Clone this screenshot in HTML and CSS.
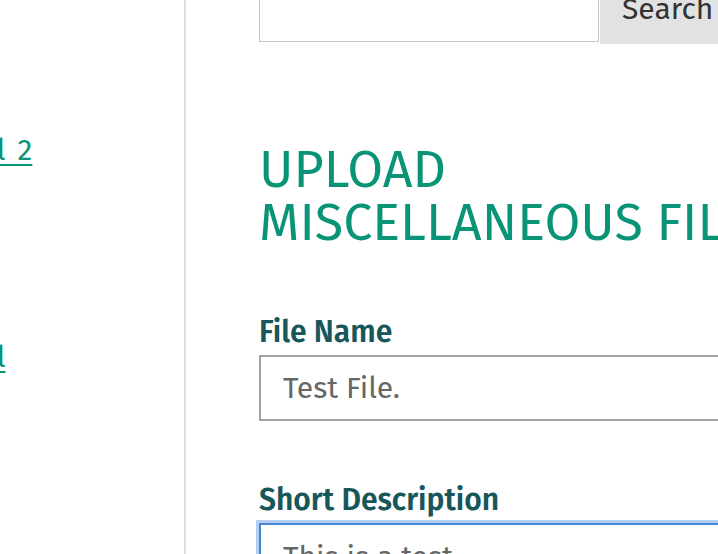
FILE: index.html
```html
<!DOCTYPE html>
<html lang="en">
<head>
    <meta charset="UTF-8"/>
    <title>Upload Miscellaneous File</title>
    <link rel="stylesheet" href="styles.css">
</head>
<body>
<div class="page">

    <!-- ========== SIDEBAR ========== -->
    <div class="sidebar">
        <ul class="side-links">
            <li class="first"><a href="#">Tutorial 2</a></li>
            <li><a href="#">Tutorial</a></li>
        </ul>
    </div>

    <!-- ========== MAIN CONTENT ========== -->
    <div class="main">
        <form class="search-form">
            <input type="text" class="search-input"/>
            <button type="button" class="search-btn">Search</button>
        </form>

        <h1 class="page-title">Upload Miscellaneous Files</h1>

        <div class="field">
            <label for="fileName">File Name</label>
            <input type="text" id="fileName" value="Test File."/>
        </div>

        <div class="field">
            <label for="shortDesc">Short Description</label>
            <textarea id="shortDesc" class="focused">This is a test</textarea>
        </div>
    </div>
</div>
</body>
</html>
```

FILE: styles.css
```css
/* ========== GLOBAL ========== */
body {
  margin: 0;
  font-family: "Fira Sans", "Open Sans", sans-serif;
  background: #fff;
  overflow: hidden;
}

.page {
  display: flex;
  margin-top: -26px; /* page is scrolled down a bit */
  min-height: 700px;
}

/* ========== SIDEBAR ========== */
.sidebar {
  width: 186px;
  flex-shrink: 0;
  border-right: 2px solid #dcdcdc;
  box-sizing: border-box;
  overflow: hidden;
}

.side-links {
  list-style: none;
  margin: 0 0 0 -99px;
  padding: 0;
  white-space: nowrap;
}
.side-links li {
  font-size: 30px;
  line-height: 36px;
}
.side-links li.first {
  margin-top: 158px;
  margin-bottom: 171px;
}
.side-links a {
  color: #0a9477;
  text-decoration: underline;
  text-decoration-thickness: 2px;
  text-underline-offset: 4px;
  word-spacing: 4px;
}

/* ========== MAIN ========== */
.main {
  flex: 1;
  min-width: 0;
  padding-left: 73px;
  white-space: nowrap;
}

.search-form {
  display: flex;
  align-items: flex-start;
}
.search-input {
  flex-shrink: 0;
  width: 340px;
  height: 68px;
  box-sizing: border-box;
  border: 1px solid #c4c4c4;
  margin: 0;
}
.search-btn {
  flex-shrink: 0;
  height: 70px;
  margin-left: 1px;
  padding: 0 22px;
  border: none;
  background: #e2e2e2;
  color: #333;
  font-family: inherit;
  font-size: 30px;
}

.page-title {
  margin: 99px 0 0;
  font-size: 52px;
  font-weight: 400;
  line-height: 53px;
  color: #0a9477;
  text-transform: uppercase;
  white-space: normal;
  width: 540px;
}

.field {
  margin-top: 65px;
}
.field + .field {
  margin-top: 61px;
}
.field label {
  display: block;
  font-size: 30px;
  line-height: 36px;
  font-weight: 600;
  color: #17575a;
  margin-bottom: 5px;
}
.field input,
.field textarea {
  display: block;
  width: 600px;
  height: 66px;
  box-sizing: border-box;
  border: 2px solid #a3a3a3;
  padding: 0 22px;
  font-family: inherit;
  font-size: 30px;
  color: #666;
  margin: 0;
}
.field textarea {
  padding-top: 14px;
  resize: none;
  height: 120px;
}
.field textarea.focused {
  border-color: #4a86d8;
  box-shadow: 0 0 0 3px #b3cff2;
}
```
